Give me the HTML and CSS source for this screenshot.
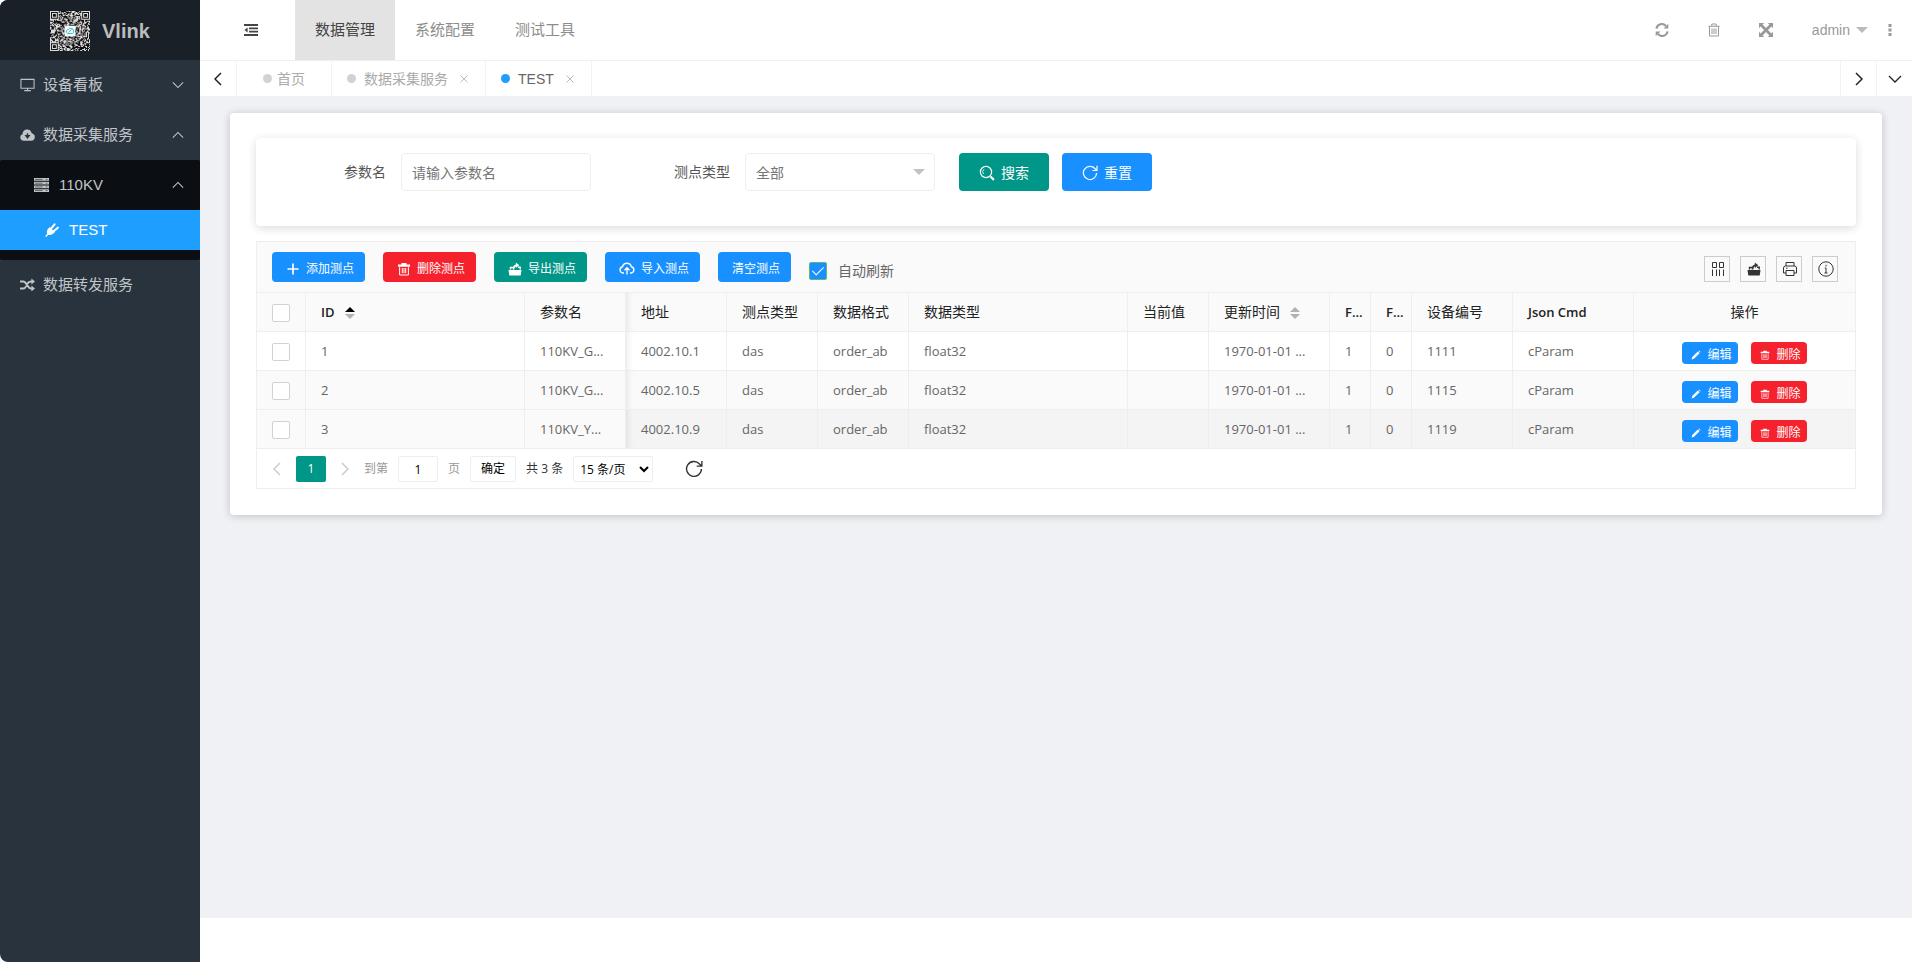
FILE: index.html
```html
<!DOCTYPE html>
<html lang="zh-CN">
<head>
    <meta charset="UTF-8">
    <meta name="viewport" content="width=device-width, initial-scale=1.0">
    <title>Vlink</title>
    <link rel="stylesheet" href="styles.css">
</head>
<body>

<!-- 图标 -->
<svg class="icon-defs" aria-hidden="true">
    <symbol id="i-fold" viewBox="0 0 14 12"><path d="M0 0h14v2H0zM5 3.4h9v1.8H5zM5 6.8h9v1.8H5zM0 10h14v2H0zM3.6 3.6v4.8L.4 6z" fill="currentColor"/></symbol>
    <symbol id="i-monitor" viewBox="0 0 16 14"><path d="M1 1h14v9.5H1zM4.5 13h7M8 10.5V13" fill="none" stroke="currentColor" stroke-width="1.1"/></symbol>
    <symbol id="i-cloud" viewBox="0 0 16 14"><path d="M4 13C1.700 13 .3 11.500.3 9.600.3 7.900 1.300 6.700 2.800 6.300 2.600 3 4.800 1 7.700 1c2.600 0 4.400 1.600 4.700 4.100 2.100.4 3.400 1.800 3.400 3.900 0 2.300-1.600 4-3.900 4z" fill="currentColor"/><path d="M8 5v3M6.300 7.800h3.400L8 10z" fill="#28333e" stroke="#28333e" stroke-width="1.500"/></symbol>
    <symbol id="i-server" viewBox="0 0 14 13"><path d="M0 0h14v2.600H0zM0 3.500h14v2.600H0zM0 7h14v2.600H0zM0 10.400h14V13H0z" fill="currentColor"/><path d="M1 1.300h7M1 4.800h7M1 8.300h7M1 11.700h7M11 1.300h1.500M11 4.800h1.500M11 8.300h1.500M11 11.700h1.500" stroke="#0b0e12" stroke-width=".5"/></symbol>
    <symbol id="i-plug" viewBox="0 0 16 16"><path d="M.8 15.200 3 12.300c-.8-2.300-.1-4.700 2-6.600l1-1 5.800 5.800-1 1c-1.900 2-4.300 2.700-6.400 1.900L1.800 15.900z" fill="currentColor"/><path d="M7.800 6.200 11.500 1.600M10.800 9.200l4.400-3.900" stroke="currentColor" stroke-width="2.300" stroke-linecap="round"/></symbol>
    <symbol id="i-shuffle" viewBox="0 0 15 13"><path d="M0 3h3.200c3.800 0 4 7 8 7H12M0 10h3.200C5 10 5.800 8.500 6.400 7.300M7.300 5.200C8 4 9 3 11 3h1" fill="none" stroke="currentColor" stroke-width="1.900"/><path d="M11.400 0 15 3l-3.600 3zM11.400 7 15 10l-3.600 3z" fill="currentColor"/></symbol>
    <symbol id="i-down" viewBox="0 0 14 8"><path d="m1 1 6 6 6-6" fill="none" stroke="currentColor" stroke-width="1.300"/></symbol>
    <symbol id="i-up" viewBox="0 0 14 8"><path d="m1 7 6-6 6 6" fill="none" stroke="currentColor" stroke-width="1.300"/></symbol>
    <symbol id="i-left" viewBox="0 0 8 14"><path d="M7 1 1 7l6 6" fill="none" stroke="currentColor" stroke-width="1.500"/></symbol>
    <symbol id="i-right" viewBox="0 0 8 14"><path d="m1 1 6 6-6 6" fill="none" stroke="currentColor" stroke-width="1.500"/></symbol>
    <symbol id="i-close" viewBox="0 0 8 8"><path d="m.5.5 7 7m0-7-7 7" stroke="currentColor" stroke-width="1"/></symbol>
    <symbol id="i-sync" viewBox="0 0 14 14"><path d="M1.400 5.600A5.500 5.500 0 0 1 11 3M12.600 8.400A5.500 5.500 0 0 1 3 11" fill="none" stroke="currentColor" stroke-width="2.100"/><path d="M13.300.8v4.800H8.500zM.7 13.200V8.400h4.800z" fill="currentColor"/></symbol>
    <symbol id="i-trash" viewBox="0 0 12 14"><path d="M.3 3.300h11.400M3.800 3V1h4.400v2M1.500 3.500V13h9V3.500M4 5.500v5.500M6 5.500v5.500M8 5.500v5.500" fill="none" stroke="currentColor" stroke-width="1"/></symbol>
    <symbol id="i-full" viewBox="0 0 14 14"><path d="M0 0h5.200L3.600 1.600 7 5l3.400-3.400L8.800 0H14v5.200l-1.600-1.600L9 7l3.400 3.400L14 8.800V14H8.800l1.600-1.600L7 9l-3.400 3.400L5.200 14H0V8.800l1.600 1.600L5 7 1.600 3.600 0 5.200z" fill="currentColor"/></symbol>
    <symbol id="i-caret" viewBox="0 0 12 6"><path d="M0 0h12L6 6z" fill="currentColor"/></symbol>
    <symbol id="i-more" viewBox="0 0 4 12"><path d="M.5 0h3v3h-3zM.5 4.500h3v3h-3zM.5 9h3v3h-3z" fill="currentColor"/></symbol>
    <symbol id="i-search" viewBox="0 0 16 16"><circle cx="7" cy="7" r="5.600" fill="none" stroke="currentColor" stroke-width="1.200"/><path d="M4.500 9A3.500 3.500 0 0 1 5 4.200" fill="none" stroke="currentColor" stroke-width=".8"/><path d="m11.500 11.500 3.400 3.400" stroke="currentColor" stroke-width="2.200"/></symbol>
    <symbol id="i-reload" viewBox="0 0 16 16"><path d="M14.600 8A6.600 6.600 0 1 1 12.900 3.500L14.800 5.400M15 .8v4.700h-4.600" fill="none" stroke="currentColor" stroke-width="1.200"/></symbol>
    <symbol id="i-plus" viewBox="0 0 14 14"><path d="M7 1.500v11M1.500 7h11" stroke="currentColor" stroke-width="1.700"/></symbol>
    <symbol id="i-bin" viewBox="0 0 14 14"><path d="M1 2.500h12v2.200H1zM4.500 1h5v1.500h-5z" fill="currentColor"/><path d="M2.600 5.200V13h8.800V5.200M5.300 6v5.200M7 6v5.200M8.700 6v5.200" fill="none" stroke="currentColor" stroke-width="1"/></symbol>
    <symbol id="i-export" viewBox="0 0 14 14"><path d="M.5 8h13l-.8 5.500H1.300z" fill="currentColor"/><path d="M2.500 7.500v-2h3M12.200 7.500v-2.300H10" fill="none" stroke="currentColor" stroke-width="1.400"/><path d="M5.500 7.600c0-2.600.8-4 2.800-4.300" fill="none" stroke="currentColor" stroke-width="1.700"/><path d="M7.800.6 11.300 3.200 7.800 5.900z" fill="currentColor"/></symbol>
    <symbol id="i-upload" viewBox="0 0 16 14"><path d="M5 11H4a3.200 3.200 0 0 1-.5-6.300 4.600 4.600 0 0 1 8.900 0A3.200 3.200 0 0 1 12 11h-1M8 12.500V6M5.500 8.300 8 5.800l2.500 2.500" fill="none" stroke="currentColor" stroke-width="1.400"/></symbol>
    <symbol id="i-pencil" viewBox="0 0 10 10"><path d="M.6 9.400 1.200 7l5.600-5.600 1.800 1.800L3 8.800zM7.400.9l.6-.5 1.600 1.600-.5.600z" fill="currentColor"/></symbol>
    <symbol id="i-cols" viewBox="0 0 14 14"><path d="M1.500.5h4v5h-4zM8.500.5h4v5h-4zM1.500 7.500V14M5.500 7.500V14M8.500 7.500V14M12.500 7.500V14" fill="none" stroke="currentColor" stroke-width="1"/></symbol>
    <symbol id="i-print" viewBox="0 0 16 16"><path d="M4 5V1.500h8V5M4 12H1.500V7q0-2 2-2h9q2 0 2 2v5H12M4 9.500h8v5H4zM4 7.200h1.500" fill="none" stroke="currentColor" stroke-width="1"/></symbol>
    <symbol id="i-info" viewBox="0 0 16 16"><circle cx="8" cy="8" r="7.200" fill="none" stroke="currentColor" stroke-width="1"/><path d="M8 3.800v1.700M8 7v5M6.800 7H8M6.500 12h3" fill="none" stroke="currentColor" stroke-width="1"/></symbol>
</svg>

<div class="layout">

    <!-- 左侧菜单 -->
    <aside class="side">
        <div class="logo">
            <svg class="qr" id="qr" viewBox="0 0 41 41" role="img" aria-label="二维码"></svg>
            <span>Vlink</span>
        </div>
        <nav class="side-nav">
            <a href="#" class="nav-item">
                <svg class="nav-icon"><use href="#i-monitor"/></svg>设备看板<svg class="nav-more"><use href="#i-down"/></svg>
            </a>
            <a href="#" class="nav-item">
                <svg class="nav-icon"><use href="#i-cloud"/></svg>数据采集服务<svg class="nav-more"><use href="#i-up"/></svg>
            </a>
            <div class="nav-child">
                <a href="#" class="nav-item level-2">
                    <svg class="nav-icon"><use href="#i-server"/></svg>110KV<svg class="nav-more"><use href="#i-up"/></svg>
                </a>
                <a href="#" class="nav-item level-3 active">
                    <svg class="nav-icon"><use href="#i-plug"/></svg>TEST
                </a>
            </div>
            <a href="#" class="nav-item">
                <svg class="nav-icon"><use href="#i-shuffle"/></svg>数据转发服务
            </a>
        </nav>
    </aside>

    <div class="main">
        <!-- 顶部 -->
        <header class="header">
            <button class="fold" type="button" aria-label="收起菜单"><svg width="14" height="12"><use href="#i-fold"/></svg></button>
            <nav class="top-nav">
                <a href="#" class="active">数据管理</a>
                <a href="#">系统配置</a>
                <a href="#">测试工具</a>
            </nav>
            <div class="header-right">
                <button class="tool" type="button" aria-label="刷新"><svg width="14" height="14"><use href="#i-sync"/></svg></button>
                <button class="tool" type="button" aria-label="清除缓存"><svg width="12" height="14"><use href="#i-trash"/></svg></button>
                <button class="tool" type="button" aria-label="全屏"><svg width="14" height="14"><use href="#i-full"/></svg></button>
                <a href="#" class="user">admin<svg width="12" height="6"><use href="#i-caret"/></svg></a>
                <button class="more" type="button" aria-label="更多"><svg width="4" height="12"><use href="#i-more"/></svg></button>
            </div>
        </header>

        <!-- 标签页 -->
        <div class="tabs">
            <button class="tab-ctrl prev" type="button" aria-label="向左"><svg width="8" height="14"><use href="#i-left"/></svg></button>
            <a href="#" class="tab home"><i class="dot"></i>首页</a>
            <a href="#" class="tab"><i class="dot"></i>数据采集服务<svg class="close"><use href="#i-close"/></svg></a>
            <a href="#" class="tab active"><i class="dot"></i>TEST<svg class="close"><use href="#i-close"/></svg></a>
            <button class="tab-ctrl next" type="button" aria-label="向右"><svg width="8" height="14"><use href="#i-right"/></svg></button>
            <button class="tab-ctrl" type="button" aria-label="标签操作"><svg width="14" height="8"><use href="#i-down"/></svg></button>
        </div>

        <main class="content">
            <div class="card">

                <!-- 查询条件 -->
                <form class="search">
                    <div class="field">
                        <label for="name">参数名</label>
                        <input id="name" type="text" placeholder="请输入参数名">
                    </div>
                    <div class="field">
                        <label for="type">测点类型</label>
                        <div class="select">
                            <select id="type"><option>全部</option></select>
                            <svg><use href="#i-caret"/></svg>
                        </div>
                    </div>
                    <div class="actions">
                        <button class="btn green" type="button"><svg width="16" height="16"><use href="#i-search"/></svg>搜索</button>
                        <button class="btn" type="button"><svg width="16" height="16"><use href="#i-reload"/></svg>重置</button>
                    </div>
                </form>

                <!-- 表格 -->
                <div class="table-box">
                    <div class="toolbar">
                        <button class="btn sm" type="button"><svg width="14" height="14"><use href="#i-plus"/></svg>添加测点</button>
                        <button class="btn sm red" type="button"><svg width="14" height="14"><use href="#i-bin"/></svg>删除测点</button>
                        <button class="btn sm green" type="button"><svg width="14" height="14"><use href="#i-export"/></svg>导出测点</button>
                        <button class="btn sm" type="button"><svg width="16" height="14"><use href="#i-upload"/></svg>导入测点</button>
                        <button class="btn sm" type="button">清空测点</button>
                        <label class="auto"><input type="checkbox" class="check" checked>自动刷新</label>
                        <div class="table-tools">
                            <button type="button" aria-label="筛选列"><svg width="14" height="14"><use href="#i-cols"/></svg></button>
                            <button type="button" aria-label="导出"><svg width="14" height="14"><use href="#i-export"/></svg></button>
                            <button type="button" aria-label="打印"><svg width="16" height="16"><use href="#i-print"/></svg></button>
                            <button type="button" aria-label="提示"><svg width="16" height="16"><use href="#i-info"/></svg></button>
                        </div>
                    </div>

                    <table>
                        <colgroup>
                            <col class="w-check"><col><col class="w-100"><col class="w-100"><col class="w-90"><col class="w-90"><col>
                            <col class="w-80"><col class="w-120"><col class="w-40"><col class="w-40"><col class="w-100"><col class="w-120"><col class="w-op">
                        </colgroup>
                        <thead>
                            <tr>
                                <th class="pin"><input type="checkbox" class="check" aria-label="全选"></th>
                                <th class="pin"><span class="en">ID</span><span class="sort asc"></span></th>
                                <th class="pin last">参数名</th>
                                <th>地址</th>
                                <th>测点类型</th>
                                <th>数据格式</th>
                                <th>数据类型</th>
                                <th>当前值</th>
                                <th>更新时间<span class="sort"></span></th>
                                <th><span class="en">F...</span></th>
                                <th><span class="en">F...</span></th>
                                <th>设备编号</th>
                                <th><span class="en">Json Cmd</span></th>
                                <th class="op">操作</th>
                            </tr>
                        </thead>
                        <tbody>
                            <tr>
                                <td class="pin"><input type="checkbox" class="check" aria-label="选择 1"></td>
                                <td class="pin">1</td><td class="pin last">110KV_G...</td><td>4002.10.1</td><td>das</td><td>order_ab</td><td>float32</td><td></td>
                                <td>1970-01-01 ...</td><td>1</td><td>0</td><td>1111</td><td>cParam</td>
                                <td class="op"><div class="row-btns"><button class="btn xs" type="button"><svg width="10" height="10"><use href="#i-pencil"/></svg>编辑</button><button class="btn xs red" type="button"><svg width="10" height="10"><use href="#i-bin"/></svg>删除</button></div></td>
                            </tr>
                            <tr>
                                <td class="pin"><input type="checkbox" class="check" aria-label="选择 2"></td>
                                <td class="pin">2</td><td class="pin last">110KV_G...</td><td>4002.10.5</td><td>das</td><td>order_ab</td><td>float32</td><td></td>
                                <td>1970-01-01 ...</td><td>1</td><td>0</td><td>1115</td><td>cParam</td>
                                <td class="op"><div class="row-btns"><button class="btn xs" type="button"><svg width="10" height="10"><use href="#i-pencil"/></svg>编辑</button><button class="btn xs red" type="button"><svg width="10" height="10"><use href="#i-bin"/></svg>删除</button></div></td>
                            </tr>
                            <tr class="hover">
                                <td class="pin"><input type="checkbox" class="check" aria-label="选择 3"></td>
                                <td class="pin">3</td><td class="pin last">110KV_Y...</td><td>4002.10.9</td><td>das</td><td>order_ab</td><td>float32</td><td></td>
                                <td>1970-01-01 ...</td><td>1</td><td>0</td><td>1119</td><td>cParam</td>
                                <td class="op"><div class="row-btns"><button class="btn xs" type="button"><svg width="10" height="10"><use href="#i-pencil"/></svg>编辑</button><button class="btn xs red" type="button"><svg width="10" height="10"><use href="#i-bin"/></svg>删除</button></div></td>
                            </tr>
                        </tbody>
                    </table>

                    <!-- 分页 -->
                    <div class="pager">
                        <button class="page-arrow" type="button" aria-label="上一页" disabled><svg width="8" height="14"><use href="#i-left"/></svg></button>
                        <button class="page-current" type="button">1</button>
                        <button class="page-arrow" type="button" aria-label="下一页" disabled><svg width="8" height="14"><use href="#i-right"/></svg></button>
                        <label for="page">到第</label>
                        <input id="page" type="text" value="1">
                        <span>页</span>
                        <button class="page-go" type="button">确定</button>
                        <span class="total">共 3 条</span>
                        <select aria-label="每页条数"><option>15 条/页</option></select>
                        <button class="page-reload" type="button" aria-label="刷新表格"><svg width="18" height="18"><use href="#i-reload"/></svg></button>
                    </div>
                </div>

            </div>
        </main>
        <footer class="footer"></footer>
    </div>
</div>

<script src="script.js"></script>
</body>
</html>
```
FILE: styles.css
```css
* {
    box-sizing: border-box;
}
body {
    margin: 0;
    font-family: "Liberation Sans", "Noto Sans CJK SC", sans-serif;
    font-size: 14px;
    line-height: 20px;
    color: #555;
    background-color: #fff;
}
a {
    color: inherit;
    text-decoration: none;
}
button, input, select {
    font: inherit;
    color: inherit;
}
button {
    padding: 0;
    border: none;
    background: none;
}
svg {
    flex: none;
    display: block;
}
.icon-defs {
    position: absolute;
    width: 0;
    height: 0;
}
.layout {
    display: flex;
    min-height: 100vh;
    border-radius: 8px;
    overflow: hidden;
}

/* 左侧菜单 */
.side {
    flex: none;
    width: 200px;
    background-color: #28333e;
    color: #c1c4c7;
}
.logo {
    display: flex;
    align-items: center;
    gap: 12px;
    height: 60px;
    padding: 2px 0 0 50px;
    background-color: #192027;
    font-size: 20px;
    font-weight: bold;
    color: #babcbe;
}
.qr {
    width: 40px;
    height: 40px;
}
.nav-item {
    display: flex;
    align-items: center;
    gap: 8px;
    height: 50px;
    padding: 0 16px 0 20px;
    font-size: 15px;
}
.nav-icon {
    width: 15px;
    height: 14px;
}
.nav-more {
    width: 12px;
    height: 8px;
    margin-left: auto;
}
.nav-child {
    padding-bottom: 10px;
    background-color: #0b0e12;
    border-radius: 2px;
}
.level-2 {
    gap: 10px;
    padding-left: 34px;
}
.level-3 {
    gap: 10px;
    height: 40px;
    padding-left: 44px;
}
.nav-item.active {
    background-color: #1e9fff;
    color: #fff;
}

/* 顶部 */
.main {
    display: flex;
    flex-direction: column;
    flex: 1;
    min-width: 0;
}
.header {
    display: flex;
    height: 60px;
    background-color: #fff;
}
.fold {
    padding: 0 37px 0 44px;
    color: #444;
}
.top-nav {
    display: flex;
    font-size: 15px;
    color: #8c8c8c;
}
.top-nav a {
    display: flex;
    align-items: center;
    padding: 0 20px;
}
.top-nav .active {
    background-color: #e3e3e3;
    color: #444;
}
.header-right {
    display: flex;
    margin-left: auto;
    color: #999;
}
.tool {
    display: grid;
    place-items: center;
    width: 52px;
}
.user {
    display: flex;
    align-items: center;
    gap: 6px;
    padding-left: 20px;
}
.user svg {
    color: #bbb;
}
.more {
    display: grid;
    place-items: center;
    width: 44px;
}

/* 标签页 */
.tabs {
    display: flex;
    height: 36px;
    border-top: 1px solid #f0f0f0;
    background-color: #fff;
    color: #aaa;
}
.tab {
    display: flex;
    align-items: center;
    gap: 8px;
    padding: 0 17px 0 15px;
    border-right: 1px solid #f2f2f2;
}
.tab.home {
    gap: 5px;
    padding: 0 26px;
}
.tab.active {
    color: #666;
}
.dot {
    width: 9px;
    height: 9px;
    border-radius: 50%;
    background-color: #d2d2d2;
}
.tab.active .dot {
    background-color: #1e9fff;
}
.close {
    width: 8px;
    height: 8px;
    margin-left: 4px;
    color: #bbb;
}
.tab-ctrl {
    display: grid;
    place-items: center;
    width: 36px;
    border-left: 1px solid #f2f2f2;
    color: #222;
}
.tab-ctrl.prev {
    width: 37px;
    border-left: none;
    border-right: 1px solid #f2f2f2;
}
.tab-ctrl.next {
    margin-left: auto;
}

/* 内容区 */
.content {
    flex: 1;
    padding: 17px 30px;
    background-color: #eff1f5;
}
.footer {
    height: 44px;
}
.card {
    padding: 25px 26px 26px;
    border-radius: 4px;
    background-color: #fff;
    box-shadow: 0 1px 8px rgba(0, 0, 0, 0.2);
}
.search {
    display: flex;
    gap: 9px;
    margin-bottom: 15px;
    padding: 15px 0 35px;
    border-radius: 4px;
    box-shadow: 0 2px 10px rgba(0, 0, 0, 0.15);
}
.field {
    display: flex;
    align-items: center;
    gap: 15px;
}
.field label {
    width: 130px;
    text-align: right;
}
.field input, .field select {
    width: 190px;
    height: 38px;
    padding: 2px 10px 0;
    border: 1px solid #eee;
    border-radius: 4px;
    background-color: #fff;
    color: #757575;
}
.field input::placeholder {
    color: #757575;
}
.select {
    display: grid;
    align-items: center;
}
.select select, .select svg {
    grid-area: 1 / 1;
}
.field select {
    appearance: none;
}
.select svg {
    justify-self: end;
    width: 12px;
    height: 6px;
    margin-right: 10px;
    color: #c2c2c2;
    pointer-events: none;
}
.actions {
    display: flex;
    gap: 13px;
    margin-left: 15px;
}
.btn {
    display: flex;
    align-items: center;
    justify-content: center;
    gap: 6px;
    width: 90px;
    height: 38px;
    padding-top: 2px;
    border-radius: 4px;
    background-color: #1890ff;
    color: #fff;
}
.btn.green {
    background-color: #009688;
}
.btn.red {
    background-color: #f5222d;
}
.btn.sm {
    width: auto;
    height: 30px;
    padding: 3px 11px 0 14px;
    font-size: 12px;
}
.btn.xs {
    width: 56px;
    height: 22px;
    padding: 4px 0 0 3px;
    font-size: 12px;
}

/* 表格 */
.table-box {
    border: 1px solid #eee;
}
.toolbar {
    display: flex;
    align-items: flex-start;
    gap: 18px;
    height: 51px;
    padding: 10px 17px 0 15px;
    border-bottom: 1px solid #eee;
    background-color: #fafafa;
}
.auto {
    display: flex;
    align-items: center;
    gap: 11px;
    margin-top: 9px;
    color: #666;
}
.check {
    appearance: none;
    display: grid;
    place-items: center;
    width: 18px;
    height: 18px;
    margin: 0;
    border: 1px solid #d2d2d2;
    border-radius: 2px;
    background-color: #fff;
}
.check:checked {
    border-color: #5fb878;
    background-color: #1890ff;
}
.check:checked::after {
    content: "";
    width: 5px;
    height: 10px;
    margin-bottom: 3px;
    border: solid #fff;
    border-width: 0 1px 1px 0;
    transform: rotate(45deg);
}
.table-tools {
    display: flex;
    gap: 10px;
    margin: 4px 0 0 auto;
}
.table-tools button {
    display: grid;
    place-items: center;
    width: 26px;
    height: 26px;
    padding-left: 1px;
    border: 1px solid #ccc;
    color: #333;
}
table {
    width: 100%;
    border-collapse: separate;
    border-spacing: 0;
    table-layout: fixed;
    font-family: "Open Sans", "Noto Sans CJK SC", sans-serif;
    color: #666;
}
.w-check { width: 49px; }
.w-40 { width: 41px; }
.w-80 { width: 81px; }
.w-90 { width: 91px; }
.w-100 { width: 101px; }
.w-120 { width: 121px; }
.w-op { width: 221px; }
th, td {
    height: 39px;
    padding: 0 0 0 15px;
    border-right: 1px solid #eee;
    border-bottom: 1px solid #eee;
    text-align: left;
    white-space: nowrap;
    overflow: hidden;
}
th:last-child, td:last-child {
    border-right: none;
}
th {
    background-color: #fafafa;
    font-weight: normal;
    color: #222;
}
td {
    font-size: 13px;
}
th .check, td .check {
    margin-top: 2px;
}
tbody tr:nth-child(even) td, tr.hover .pin {
    background-color: #fafafa;
}
tr.hover td:not(.pin) {
    background-color: #f4f4f4;
}
/* 固定列右侧阴影 */
.pin.last + th, .pin.last + td {
    box-shadow: inset 8px 0 8px -8px rgba(0, 0, 0, 0.12);
}
.en {
    font-size: 13px;
    font-weight: 600;
}
.sort {
    display: inline-grid;
    gap: 2px;
    margin-left: 10px;
    vertical-align: middle;
}
.sort::before, .sort::after {
    content: "";
    border: 5px solid transparent;
}
.sort::before {
    border-top: none;
    border-bottom-color: #b2b2b2;
}
.sort::after {
    border-bottom: none;
    border-top-color: #b2b2b2;
}
.sort.asc::before {
    border-bottom-color: #000;
}
.op {
    padding: 0;
    text-align: center;
}
.row-btns {
    display: flex;
    justify-content: center;
    gap: 13px;
    padding-top: 4px;
}

/* 分页 */
.pager {
    display: flex;
    align-items: center;
    gap: 10px;
    height: 39px;
    padding: 1px 0 0 11px;
    font-family: "Open Sans", "Noto Sans CJK SC", sans-serif;
    font-size: 12px;
    color: #999;
}
.page-arrow {
    display: grid;
    place-items: center;
    width: 18px;
    height: 26px;
    color: #ccc;
}
.page-current {
    width: 30px;
    height: 26px;
    border-radius: 2px;
    background-color: #009688;
    color: #fff;
}
.pager input, .pager select, .page-go {
    height: 26px;
    border: 1px solid #eee;
    border-radius: 2px;
    background-color: #fff;
    color: #000;
}
.pager input {
    width: 40px;
    padding: 0;
    text-align: center;
}
.page-go {
    width: 46px;
}
.pager select {
    width: 80px;
    padding: 0 2px;
}
.total {
    color: #333;
}
.page-reload {
    margin-left: 22px;
    color: #333;
}
```
FILE: script.js
```javascript
// 绘制 logo 二维码
(function () {
    var size = 41;
    var seed = 7;
    var path = '';

    function random() {
        seed = (seed * 1103515245 + 12345) % 2147483648;
        return seed / 2147483648;
    }

    // 三个角的定位块
    function finder(x, y) {
        var ox = x < 9 ? 1 : x > size - 10 ? size - 8 : -1;
        var oy = y < 9 ? 1 : y > size - 10 ? size - 8 : -1;
        if (ox < 0 || oy < 0 || (ox > 1 && oy > 1)) return null;
        var d = Math.max(Math.abs(x - ox - 3), Math.abs(y - oy - 3));
        return d === 3 || d < 2;
    }

    for (var y = 0; y < size; y++) {
        for (var x = 0; x < size; x++) {
            var f = finder(x, y);
            var on = f === null ? random() > 0.48 : f;
            if (on) path += 'M' + x + ' ' + y + 'h1v1h-1z';
        }
    }

    document.getElementById('qr').innerHTML =
        '<path d="M0 0h41v41H0z" fill="#ddd"/>' +
        '<path d="' + path + '" fill="#111"/>' +
        '<rect x="15" y="15" width="11" height="11" rx="1" fill="#f4f8f8"/>' +
        '<path d="M18 23q-2-1-1-3 1-1 2-1 1-2 3-1 2 0 2 2 1 2-1 3zM19 22l3-3" fill="none" stroke="#35b8c8"/>';
})();
```
